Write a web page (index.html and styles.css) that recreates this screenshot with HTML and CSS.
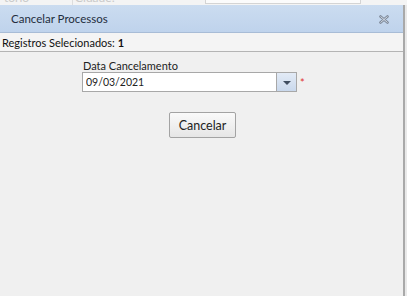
FILE: index.html
```html
<!DOCTYPE html>
<html>

<head>
	<title>Cancelar Processos</title>
	<meta charset="UTF-8">
	<meta name="viewport" content="width=device-width, initial-scale=1.0">
	<link rel="stylesheet" href="styles.css">
</head>

<body>
	<div class="backdrop">
		<span class="bg-label">tório</span>
		<span class="bg-label bg-city">Cidade:</span>
		<span class="bg-input"></span>
	</div>
	<div class="dialog">
		<div class="titlebar">
			<span class="title">Cancelar Processos</span>
			<svg class="close" width="10" height="9" viewBox="0 0 10 9">
				<path d="M1.5 1.5 L8.5 7.5 M8.5 1.5 L1.5 7.5" stroke="#7d8898" stroke-width="2.6" stroke-linecap="round" fill="none" />
				<path d="M1.5 1.5 L8.5 7.5 M8.5 1.5 L1.5 7.5" stroke="#dfe7f1" stroke-width="0.9" fill="none" />
			</svg>
		</div>
		<div class="info">Registros Selecionados: <b>1</b></div>
		<div class="content">
			<div class="field">
				<label for="dataCancel">Data Cancelamento</label>
				<div class="field-row">
					<div class="combo">
						<input type="text" id="dataCancel" value="09/03/2021">
						<span class="trigger"><span class="arrow"></span></span>
					</div>
					<span class="required">*</span>
				</div>
			</div>
			<button type="button">Cancelar</button>
		</div>
	</div>
</body>

</html>
```

FILE: styles.css
```css
* {
	box-sizing: border-box;
}

body {
	font-family: "Lato", "Liberation Sans", sans-serif;
	font-size: 11px;
	color: #222;
	margin: 0;
	padding: 0;
	width: 407px;
	height: 296px;
	overflow: hidden;
	background-color: #e9e9e9;
}

.backdrop {
	position: relative;
	height: 5px;
	overflow: hidden;
	background-color: #f4f4f4;
	color: #c9c9c9;
	font-size: 12px;
}

.bg-label {
	position: absolute;
	top: -9px;
	left: 4px;
	line-height: 14px;
}

.bg-city {
	left: 72px;
	border-left: 1px solid #ddd;
	padding-left: 2px;
}

.bg-input {
	position: absolute;
	top: -10px;
	left: 205px;
	width: 156px;
	height: 14px;
	border: 1px solid #d4d4d4;
	background-color: #fbfbfb;
}

.dialog {
	width: 405px;
	height: 291px;
	background-color: #f0f0f0;
	border-right: 2px solid #a9a9a9;
	display: flex;
	flex-direction: column;
}

.titlebar {
	height: 28px;
	display: flex;
	align-items: center;
	justify-content: space-between;
	padding: 0 14px 0 11px;
	background: linear-gradient(#cbdcf0, #bfd3ec);
	border-bottom: 1px solid #a8bcd6;
}

.title {
	font-size: 11.5px;
	color: #1f2d3d;
}

.close {
	margin-top: 2px;
}

.info {
	height: 19px;
	padding: 3px 2px 0;
	border-bottom: 1px solid #b4b4b4;
	background-color: #f4f4f4;
	color: #111;
	font-size: 11px;
}

.content {
	display: flex;
	flex-direction: column;
	align-items: center;
	padding-top: 7px;
}

.field {
	display: flex;
	flex-direction: column;
	align-self: flex-start;
	margin-left: 82px;
}

label {
	line-height: 13px;
	margin-left: 1px;
	font-size: 11px;
	color: #222;
}

.field-row {
	display: flex;
	align-items: center;
}

.combo {
	display: flex;
	width: 215px;
	height: 20px;
	border: 1px solid #a8a8a8;
	background-color: #fff;
}

input {
	flex: 1;
	min-width: 0;
	border: none;
	padding: 0 3px;
	font-family: inherit;
	font-size: 10.5px;
	color: #222;
	background: transparent;
	outline: none;
}

.trigger {
	width: 20px;
	border-left: 1px solid #a8a8a8;
	background: linear-gradient(#e3ebf6, #c9d8ec);
	display: flex;
	align-items: center;
	justify-content: center;
}

.arrow {
	width: 0;
	height: 0;
	border-left: 4px solid transparent;
	border-right: 4px solid transparent;
	border-top: 4px solid #3f4d60;
	margin-top: 1px;
}

.required {
	color: #e03030;
	margin-left: 3px;
	font-size: 11px;
	line-height: 1;
}

button {
	margin-top: 20px;
	margin-left: 2px;
	width: 67px;
	height: 26px;
	font-family: inherit;
	font-size: 12.5px;
	color: #222;
	border: 1px solid #a3a3a3;
	border-radius: 2px;
	background: linear-gradient(#fafafa, #e6e6e6);
	padding: 0;
}
```
